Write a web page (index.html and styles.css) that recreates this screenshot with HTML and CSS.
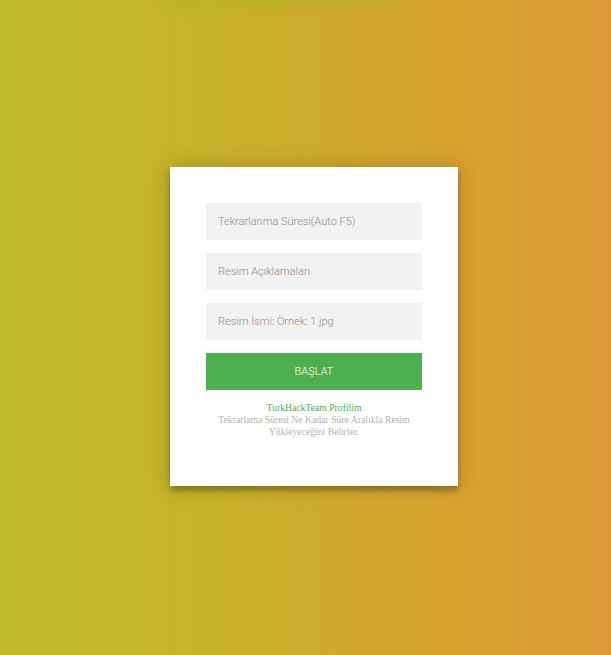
FILE: index.html
```html
<!DOCTYPE html>
<html lang="tr">

<head>
  <meta charset="UTF-8" />
  <title>Otomatik Resim Yükleme</title>
  <meta name="viewport" content="width=device-width, initial-scale=1" />
  <link rel="stylesheet" href="styles.css">
</head>

<body>
  <div class="login-page">
    <div class="form">
      <form class="login-form">
        <input type="text" placeholder="Tekrarlanma Süresi(Auto F5)" />
        <input type="text" placeholder="Resim Açıklamaları" />
        <input type="text" placeholder="Resim İsmi: Örnek: 1.jpg" />
        <button type="button">Başlat</button>
        <p class="message">
          <a href="#">TurkHackTeam Profilim</a><br>
          Tekrarlama Süresi Ne Kadar Süre Aralıkla Resim Yükleyeceğini Belirler.
        </p>
      </form>
    </div>
  </div>
</body>

</html>
```

FILE: styles.css
```css
html,
body {
  margin: 0;
  height: 100%;
}

body {
  background: linear-gradient(to right, #bfba2b, #c9b02c 40%, #d9a22f 75%, #dc9a36);
  font-family: Roboto, "Liberation Sans", sans-serif;
  position: relative;
  overflow: hidden;
}

/* soft blob peeking in at the top edge */
body::before {
  content: '';
  position: absolute;
  left: 140px;
  top: -40px;
  width: 275px;
  height: 52px;
  border-radius: 0 0 60px 80px;
  background: rgba(185, 180, 42, 0.45);
  filter: blur(2px);
}

.login-page {
  height: 100%;
  display: flex;
  align-items: center;
  justify-content: center;
  padding: 0 0 2px 17px;
  box-sizing: border-box;
}

.form {
  position: relative;
  z-index: 1;
  width: 288px;
  background: #fff;
  padding: 36px 36px 48px;
  box-sizing: border-box;
  text-align: center;
  box-shadow: 0 0 20px 0 rgba(0, 0, 0, 0.2), 0 5px 5px 0 rgba(0, 0, 0, 0.24);
}

.form input {
  display: block;
  width: 100%;
  height: 37px;
  margin: 0 0 13px;
  padding: 0 12px;
  border: 0;
  outline: 0;
  background: #f2f2f2;
  box-sizing: border-box;
  font-family: Roboto, "Liberation Sans", sans-serif;
  font-size: 11px;
  font-weight: 300;
  color: #333;
}

.form input::placeholder {
  color: #8c8c8c;
}

.form button {
  display: block;
  width: 100%;
  height: 37px;
  border: 0;
  outline: 0;
  background: #4caf50;
  color: #fff;
  font-family: Roboto, "Liberation Sans", sans-serif;
  font-size: 11px;
  font-weight: 300;
  text-transform: uppercase;
  cursor: pointer;
}

.form button:hover {
  background: #43a047;
}

.message {
  margin: 12px 0 0;
  font-family: "Liberation Serif", serif;
  font-size: 9.7px;
  line-height: 12px;
  color: #b3b3b3;
}

.message a {
  color: #4caf50;
  text-decoration: none;
}
```
